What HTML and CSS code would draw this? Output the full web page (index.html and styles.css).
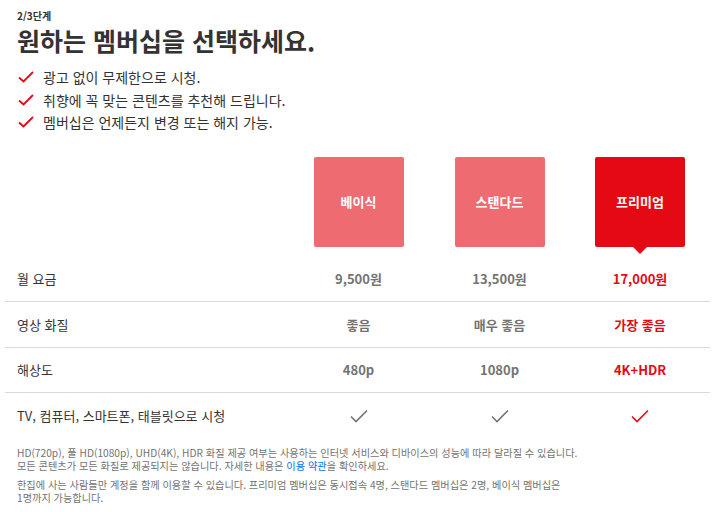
FILE: index.html
```html
<!DOCTYPE html>
<html lang="ko">
<head>
<meta charset="utf-8">
<link rel="stylesheet" href="styles.css">
</head>
<body>
<div class="page">
  <div class="intro">
    <div class="step">2/3단계</div>
    <h1 class="title">원하는 멤버십을 선택하세요.</h1>
    <ul class="checks">
      <li><svg class="chk" viewBox="0 0 16 12"><path d="M1 6.5 L5.5 10.5 L15 1" fill="none" stroke="#e50914" stroke-width="1.8"/></svg>광고 없이 무제한으로 시청.</li>
      <li><svg class="chk" viewBox="0 0 16 12"><path d="M1 6.5 L5.5 10.5 L15 1" fill="none" stroke="#e50914" stroke-width="1.8"/></svg>취향에 꼭 맞는 콘텐츠를 추천해 드립니다.</li>
      <li><svg class="chk" viewBox="0 0 16 12"><path d="M1 6.5 L5.5 10.5 L15 1" fill="none" stroke="#e50914" stroke-width="1.8"/></svg>멤버십은 언제든지 변경 또는 해지 가능.</li>
    </ul>
  </div>

  <div class="plans">
    <div class="plan-head"></div>
    <div class="plan-col"><div class="plan-box">베이식</div></div>
    <div class="plan-col"><div class="plan-box">스탠다드</div></div>
    <div class="plan-col"><div class="plan-box selected">프리미엄</div></div>
  </div>

  <div class="table">
    <div class="row">
      <div class="label">월 요금</div>
      <div class="cell">9,500원</div>
      <div class="cell">13,500원</div>
      <div class="cell sel">17,000원</div>
    </div>
    <div class="row">
      <div class="label">영상 화질</div>
      <div class="cell">좋음</div>
      <div class="cell">매우 좋음</div>
      <div class="cell sel">가장 좋음</div>
    </div>
    <div class="row">
      <div class="label">해상도</div>
      <div class="cell">480p</div>
      <div class="cell">1080p</div>
      <div class="cell sel">4K+HDR</div>
    </div>
    <div class="row last">
      <div class="label">TV, 컴퓨터, 스마트폰, 태블릿으로 시청</div>
      <div class="cell"><svg class="tick" viewBox="0 0 18 14"><path d="M1 7.5 L6 12.5 L17 1.5" fill="none" stroke="#737373" stroke-width="1.6"/></svg></div>
      <div class="cell"><svg class="tick" viewBox="0 0 18 14"><path d="M1 7.5 L6 12.5 L17 1.5" fill="none" stroke="#737373" stroke-width="1.6"/></svg></div>
      <div class="cell"><svg class="tick" viewBox="0 0 18 14"><path d="M1 7.5 L6 12.5 L17 1.5" fill="none" stroke="#e50914" stroke-width="1.6"/></svg></div>
    </div>
  </div>

  <div class="notes">
    <p>HD(720p), 풀 HD(1080p), UHD(4K), HDR 화질 제공 여부는 사용하는 인터넷 서비스와 디바이스의 성능에 따라 달라질 수 있습니다.<br>모든 콘텐츠가 모든 화질로 제공되지는 않습니다. 자세한 내용은 <a href="#">이용 약관</a>을 확인하세요.</p>
    <p>한집에 사는 사람들만 계정을 함께 이용할 수 있습니다. 프리미엄 멤버십은 동시접속 4명, 스탠다드 멤버십은 2명, 베이식 멤버십은<br>1명까지 가능합니다.</p>
  </div>
</div>
</body>
</html>
```

FILE: styles.css
```css
* { box-sizing: border-box; }
html, body { margin: 0; padding: 0; background: #fff; }
body {
  font-family: "Noto Sans CJK KR", "Noto Sans", sans-serif;
  color: #333;
}
.page {
  width: 705px;
  margin-left: 5px;
}
.intro { padding-left: 12px; padding-top: 10px; }
.step {
  font-size: 10px;
  font-weight: 700;
  line-height: 12px;
  color: #333;
}
.title {
  margin: 0;
  font-size: 25px;
  font-weight: 700;
  line-height: 36px;
  color: #333;
}
.checks {
  list-style: none;
  margin: 8px 0 0;
  padding: 0;
}
.checks li {
  display: flex;
  align-items: center;
  font-size: 14px;
  line-height: 22.5px;
  color: #333;
}
.chk { width: 16px; height: 12px; margin: 0 9px 0 1px; flex: none; }

.plans {
  display: grid;
  grid-template-columns: 283px 141px 141px 140px;
  margin-top: 23px;
}
.plan-col { display: flex; justify-content: center; }
.plan-box {
  position: relative;
  width: 90px;
  height: 90px;
  background: #ef6b72;
  border-radius: 2px;
  color: #fff;
  font-size: 13px;
  font-weight: 700;
  display: flex;
  align-items: center;
  justify-content: center;
}
.plan-box.selected { background: #e50914; }
.plan-box.selected::after {
  content: "";
  position: absolute;
  left: 50%;
  top: 100%;
  margin-left: -7px;
  border-left: 7px solid transparent;
  border-right: 7px solid transparent;
  border-top: 7px solid #e50914;
}

.table { margin-top: 10px; }
.row {
  display: grid;
  grid-template-columns: 283px 141px 141px 140px;
  height: 45.5px;
  align-items: center;
  border-bottom: 1px solid #d9d9d9;
}
.row.last { border-bottom: none; }
.label {
  padding-left: 12px;
  font-size: 13px;
  color: #333;
}
.cell {
  text-align: center;
  font-size: 13px;
  font-weight: 700;
  color: #737373;
  display: flex;
  justify-content: center;
}
.cell.sel { color: #e50914; }
.tick { width: 18px; height: 14px; }

.notes {
  padding-left: 12px;
  margin-top: 7px;
  font-size: 10.2px;
  line-height: 13.5px;
  color: #737373;
}
.notes p { margin: 0 0 5px; }
.notes a { color: #0071eb; text-decoration: none; }
```
